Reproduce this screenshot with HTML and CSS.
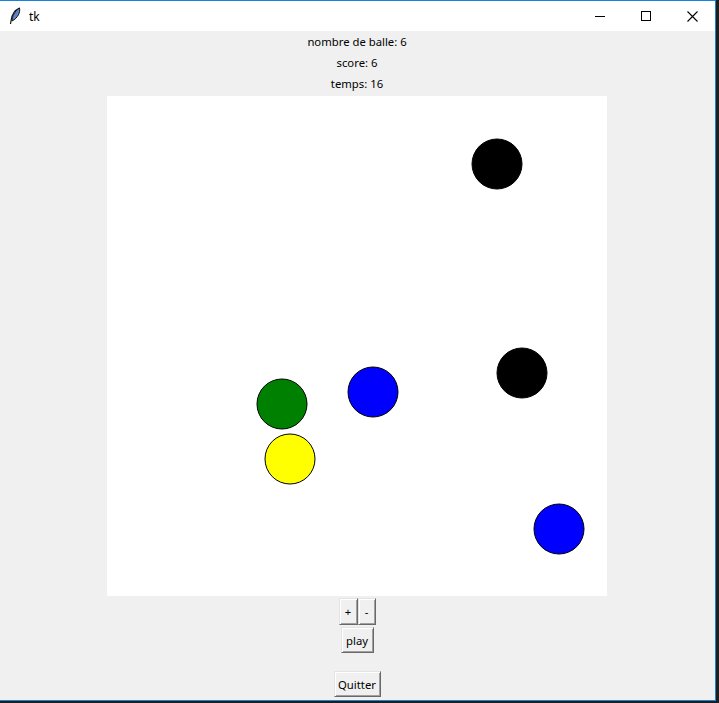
FILE: index.html
```html
<!DOCTYPE html>
<html>
<head>
<meta charset="utf-8">
<link rel="stylesheet" href="styles.css">
</head>
<body>
<div class="window">
  <div class="titlebar">
    <div class="title-left">
      <svg class="feather" width="12" height="18" viewBox="0 0 12 18">
        <path d="M10.5 1 C6 3 3 7 2.2 13 L1.5 17" fill="none" stroke="#111" stroke-width="1.2"/>
        <path d="M10.5 1 C11.5 5 9 11 3 14 C3 9 6 4 10.5 1 Z" fill="#5b86c9" stroke="#111" stroke-width="1"/>
      </svg>
      <span class="title">tk</span>
    </div>
    <div class="controls">
      <span class="ctl"><svg width="10" height="10" viewBox="0 0 10 10"><path d="M0 5.5 H10" stroke="#000" stroke-width="1"/></svg></span>
      <span class="ctl"><svg width="10" height="10" viewBox="0 0 10 10"><rect x="0.5" y="0.5" width="9" height="9" fill="none" stroke="#000" stroke-width="1"/></svg></span>
      <span class="ctl"><svg width="11" height="11" viewBox="0 0 11 11"><path d="M0.5 0.5 L10.5 10.5 M10.5 0.5 L0.5 10.5" stroke="#000" stroke-width="1.1"/></svg></span>
    </div>
  </div>
  <div class="content">
    <div class="label">nombre de balle: 6</div>
    <div class="label">score: 6</div>
    <div class="label">temps: 16</div>
    <div class="canvas-wrap">
      <svg class="canvas" width="500" height="500" viewBox="0 0 500 500">
        <circle cx="390" cy="68" r="25" fill="#000" stroke="#000"/>
        <circle cx="415" cy="277" r="25" fill="#000" stroke="#000"/>
        <circle cx="266" cy="296" r="25" fill="#0000ff" stroke="#000"/>
        <circle cx="175" cy="308" r="25" fill="#008000" stroke="#000"/>
        <circle cx="183" cy="363" r="25" fill="#ffff00" stroke="#000"/>
        <circle cx="452" cy="433" r="25" fill="#0000ff" stroke="#000"/>
      </svg>
    </div>
    <div class="pm">
      <button class="btn small">+</button><button class="btn small">-</button>
    </div>
    <button class="btn play">play</button>
    <button class="btn quit">Quitter</button>
  </div>
</div>
</body>
</html>
```
FILE: styles.css
```css
html, body {
  margin: 0;
  padding: 0;
  background: #1e1e1e;
  width: 719px;
  height: 703px;
  overflow: hidden;
}
.window {
  width: 715px;
  height: 699px;
  border-top: 1px solid #1883d7;
  border-right: 1px solid #1883d7;
  border-bottom: 1px solid #1883d7;
  background: #f0f0f0;
  display: flex;
  flex-direction: column;
  font-family: "Noto Sans", "Open Sans", sans-serif;
}
.titlebar {
  height: 30px;
  background: #ffffff;
  display: flex;
  align-items: center;
  justify-content: space-between;
}
.title-left {
  display: flex;
  align-items: center;
  padding-left: 9px;
  gap: 8px;
}
.title {
  font-size: 12px;
  color: #000;
}
.controls {
  display: flex;
  height: 30px;
}
.ctl {
  width: 46px;
  height: 30px;
  display: flex;
  align-items: center;
  justify-content: center;
}
.content {
  flex: 1;
  display: flex;
  flex-direction: column;
  align-items: center;
  padding-right: 1px;
}
.label {
  height: 21px;
  line-height: 21px;
  font-size: 11.3px;
  color: #000;
}
.canvas-wrap {
  padding: 2px;
  line-height: 0;
}
.canvas {
  background: #ffffff;
  display: block;
}
.pm {
  display: flex;
}
.btn {
  font-family: "Noto Sans", "Open Sans", sans-serif;
  font-size: 11.3px;
  color: #000;
  background: #f0f0f0;
  border: 1px solid;
  border-color: #e3e3e3 #696969 #696969 #e3e3e3;
  box-shadow: inset 1px 1px 0 #ffffff, inset -1px -1px 0 #a0a0a0;
  padding: 0;
  margin: 0;
  height: 27px;
  line-height: 23px;
}
.small {
  width: 19px;
}
.small + .small {
  width: 18px;
}
.play {
  width: 33px;
  height: 26px;
  margin-top: 2px;
}
.quit {
  width: 47px;
  height: 26px;
  margin-top: 18px;
}
```
